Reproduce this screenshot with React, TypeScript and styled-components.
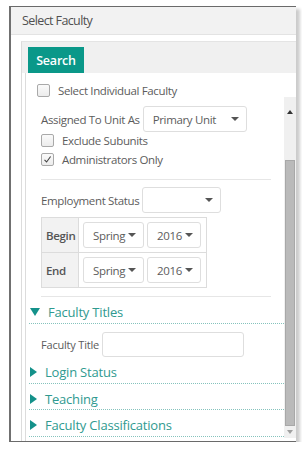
import styled, { createGlobalStyle } from "styled-components";

const GlobalStyle = createGlobalStyle`
  body {
    margin: 0;
    background: #fff;
    font-family: "Open Sans", "DejaVu Sans", sans-serif;
    font-size: 11.5px;
    letter-spacing: -0.35px;
    color: #5c5c5c;
  }
`;

const WINDOW = styled.div`
  margin: 6px 0 0 9px;
  width: 285px;
  height: 434px;
  border-top: 1px solid #6a6a6a;
  border-left: 2px solid #707070;
  border-bottom: 1px solid #6a6a6a;
  box-shadow: 4px 3px 3px rgba(0, 0, 0, 0.2);
  background: #fff;
  display: flex;
  flex-direction: column;
  overflow: hidden;
`;

const TITLEBAR = styled.div`
  height: 27px;
  line-height: 28px;
  flex-shrink: 0;
  background: #f2f2f2;
  border-bottom: 1px solid #e3e3e3;
  padding-left: 11px;
  font-size: 12.5px;
  letter-spacing: -0.6px;
  color: #505050;
`;

const PANEL = styled.div`
  flex: 1;
  margin: 6px 0 0 10px;
  border-left: 1px solid #dcdcdc;
  border-top: 1px solid #e4e4e4;
  display: flex;
  flex-direction: column;
  min-height: 0;
`;

const TABBAR = styled.div`
  height: 31px;
  flex-shrink: 0;
  background: #f0f0f0;
  padding-left: 6px;
  display: flex;
  align-items: flex-end;
`;

const TAB = styled.div`
  width: 56px;
  height: 26px;
  background: #0a9889;
  color: #fff;
  font-size: 12.5px;
  font-weight: 600;
  letter-spacing: -0.2px;
  display: flex;
  align-items: center;
  justify-content: center;
`;

const BODY = styled.div`
  flex: 1;
  margin-left: 3px;
  border-left: 1px solid #dcdcdc;
  display: flex;
  flex-direction: column;
  min-height: 0;
`;

const TOPROW = styled.div`
  height: 24px;
  flex-shrink: 0;
  padding: 11px 0 0 11px;
  box-sizing: border-box;
`;

const SCROLLAREA = styled.div`
  flex: 1;
  display: flex;
  min-height: 0;
  margin-bottom: 3px;
`;

const CONTENT = styled.div`
  flex: 1;
  padding-left: 3px;
  overflow: hidden;
`;

const SECTION = styled.div<{ $top?: number }>`
  padding: ${(p) => p.$top ?? 0}px 13px 0 12px;
`;

const CHECKLINE = styled.label`
  display: flex;
  align-items: center;
  gap: 8px;
  height: 13px;
`;

const BOX = styled.span`
  width: 11px;
  height: 11px;
  border: 1px solid #a9a9a9;
  border-radius: 2px;
  background: linear-gradient(#fafafa, #ececec);
  display: flex;
  align-items: center;
  justify-content: center;
  flex-shrink: 0;
`;

const FIELDROW = styled.div<{ $top?: number }>`
  display: flex;
  align-items: center;
  gap: 3px;
  margin-top: ${(p) => p.$top ?? 0}px;
`;

const LABEL = styled.span<{ $small?: boolean }>`
  white-space: nowrap;
  ${(p) => p.$small && "font-size: 11px; letter-spacing: -0.2px;"}
`;

const SELECT = styled.div<{ $w: number }>`
  width: ${(p) => p.$w}px;
  height: 26px;
  box-sizing: border-box;
  border: 1px solid #dedede;
  border-radius: 3px;
  background: #fff;
  display: flex;
  align-items: center;
  justify-content: space-between;
  padding: 0 7px 0 9px;
  white-space: nowrap;
`;

const CARET = styled.span`
  width: 0;
  height: 0;
  border-left: 4px solid transparent;
  border-right: 4px solid transparent;
  border-top: 4px solid #555;
`;

const CHECKS = styled.div`
  display: flex;
  flex-direction: column;
  gap: 6px;
  margin-top: 2px;
`;

const DIVIDER = styled.div<{ $top: number }>`
  height: 1px;
  background: #e6e6e6;
  margin-top: ${(p) => p.$top}px;
`;

const TABLE = styled.table`
  border-collapse: collapse;
  margin-top: 4px;
`;

const TH = styled.th`
  width: 32px;
  height: 34px;
  padding: 0 0 0 4px;
  background: #f2f2f2;
  border: 1px solid #dcdcdc;
  font-size: 11.5px;
  font-weight: 600;
  color: #555;
  text-align: left;
`;

const TD = styled.td`
  border: 1px solid #dcdcdc;
  padding: 0 5px 0 4px;
`;

const PAIR = styled.div`
  display: flex;
  gap: 3px;
`;

const ACCHEAD = styled.div<{ $h: number }>`
  height: ${(p) => p.$h}px;
  box-sizing: border-box;
  border-bottom: 1px dotted #86c3bd;
  display: flex;
  align-items: center;
  padding: 4px 0 0 1px;
  font-size: 13px;
  letter-spacing: -0.2px;
  color: #2f9a90;
`;

const DOWN = styled.span`
  width: 0;
  height: 0;
  border-left: 5px solid transparent;
  border-right: 5px solid transparent;
  border-top: 8px solid #14918a;
  margin-right: 8px;
`;

const RIGHT = styled.span`
  width: 0;
  height: 0;
  border-top: 5px solid transparent;
  border-bottom: 5px solid transparent;
  border-left: 7px solid #14918a;
  margin-right: 8px;
`;

const INPUT = styled.div`
  width: 142px;
  height: 25px;
  box-sizing: border-box;
  border: 1px solid #dedede;
  border-radius: 3px;
  background: #fff;
`;

const SCROLLBAR = styled.div`
  width: 12px;
  background: #f0f0f0;
  display: flex;
  flex-direction: column;
  align-items: center;
`;

const ARROW = styled.span<{ $up?: boolean }>`
  width: 0;
  height: 0;
  margin-top: ${(p) => (p.$up ? 13 : 4)}px;
  border-left: 3px solid transparent;
  border-right: 3px solid transparent;
  ${(p) =>
    p.$up ? "border-bottom: 4px solid #333;" : "border-top: 4px solid #a0a0a0;"}
`;

const THUMB = styled.div`
  width: 10px;
  height: 266px;
  box-sizing: border-box;
  margin-top: 46px;
  background: #bababa;
  border: 1px solid #a8a8a8;
`;

function Check({ checked }: { checked?: boolean }) {
  return (
    <BOX>
      {checked && (
        <svg width="9" height="9" viewBox="0 0 9 9">
          <path d="M1.5 4.8 L3.6 7 L7.6 1.5" fill="none" stroke="#444" strokeWidth="1.1" />
        </svg>
      )}
    </BOX>
  );
}

function Term({ label }: { label: string }) {
  return (
    <tr>
      <TH>{label}</TH>
      <TD>
        <PAIR>
          <SELECT $w={61}>
            Spring <CARET />
          </SELECT>
          <SELECT $w={54}>
            2016 <CARET />
          </SELECT>
        </PAIR>
      </TD>
    </tr>
  );
}

export default function App() {
  return (
    <>
      <GlobalStyle />
      <WINDOW>
        <TITLEBAR>Select Faculty</TITLEBAR>
        <PANEL>
          <TABBAR>
            <TAB>Search</TAB>
          </TABBAR>
          <BODY>
            <TOPROW>
              <CHECKLINE>
                <Check /> Select Individual Faculty
              </CHECKLINE>
            </TOPROW>
            <SCROLLAREA>
              <CONTENT>
                <SECTION $top={9}>
                  <FIELDROW>
                    <LABEL>Assigned To Unit As</LABEL>
                    <SELECT $w={104}>
                      Primary Unit <CARET />
                    </SELECT>
                  </FIELDROW>
                  <CHECKS>
                    <CHECKLINE>
                      <Check /> Exclude Subunits
                    </CHECKLINE>
                    <CHECKLINE>
                      <Check checked /> Administrators Only
                    </CHECKLINE>
                  </CHECKS>
                  <DIVIDER $top={13} />
                  <FIELDROW $top={7}>
                    <LABEL>Employment Status</LABEL>
                    <SELECT $w={79}>
                      <span />
                      <CARET />
                    </SELECT>
                  </FIELDROW>
                  <TABLE>
                    <tbody>
                      <Term label="Begin" />
                      <Term label="End" />
                    </tbody>
                  </TABLE>
                  <DIVIDER $top={8} />
                </SECTION>
                <ACCHEAD $h={27}>
                  <DOWN />
                  Faculty Titles
                </ACCHEAD>
                <SECTION $top={8}>
                  <FIELDROW>
                    <LABEL $small>Faculty Title</LABEL>
                    <INPUT />
                  </FIELDROW>
                </SECTION>
                <ACCHEAD $h={27}>
                  <RIGHT />
                  Login Status
                </ACCHEAD>
                <ACCHEAD $h={26}>
                  <RIGHT />
                  Teaching
                </ACCHEAD>
                <ACCHEAD $h={27}>
                  <RIGHT />
                  Faculty Classifications
                </ACCHEAD>
              </CONTENT>
              <SCROLLBAR>
                <ARROW $up />
                <THUMB />
                <ARROW />
              </SCROLLBAR>
            </SCROLLAREA>
          </BODY>
        </PANEL>
      </WINDOW>
    </>
  );
}
